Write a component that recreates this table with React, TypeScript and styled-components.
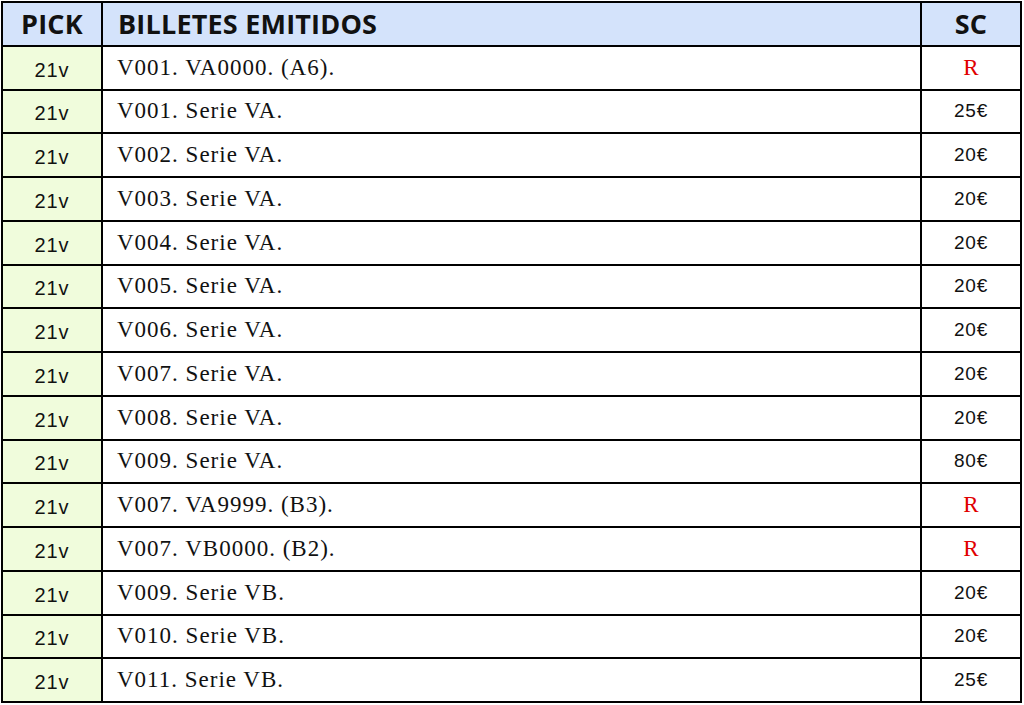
import styled, { createGlobalStyle } from 'styled-components';

const GlobalStyle = createGlobalStyle`
   html, body {
      margin: 0;
      padding: 0;
      background: #ffffff;
   }
`;

const Table = styled.div`
   margin: 1px;
   width: 1021px;
   height: 702px;
   box-sizing: border-box;
   padding: 2px;
   background-color: #000;
   display: grid;
   grid-template-columns: 98px 1fr 98px;
   grid-template-rows: repeat(16, 1fr);
   gap: 2px;
`;

const HeadCell = styled.div<{ align?: 'left' | 'center' }>`
   background-color: #d4e3fb;
   display: flex;
   align-items: center;
   justify-content: ${(props) => (props.align === 'left' ? 'flex-start' : 'center')};
   padding-left: ${(props) => (props.align === 'left' ? '15px' : '0')};
   font-family: 'Open Sans', 'Noto Sans', sans-serif;
   font-weight: 700;
   font-size: 27px;
   letter-spacing: 0.2px;
   color: #111;
`;

const PickCell = styled.div`
   background-color: #f0fcdc;
   display: flex;
   align-items: center;
   justify-content: center;
   font-family: 'Liberation Sans', Arial, sans-serif;
   font-size: 20px;
   letter-spacing: 1px;
   color: #111;
   padding-top: 5px;
`;

const NameCell = styled.div`
   background-color: #fff;
   display: flex;
   align-items: center;
   padding-left: 14px;
   font-family: 'Liberation Serif', 'Times New Roman', serif;
   font-size: 23px;
   letter-spacing: 1px;
   color: #111;
`;

const PriceCell = styled.div<{ rare: boolean }>`
   background-color: #fff;
   display: flex;
   align-items: center;
   justify-content: center;
   color: ${(props) => (props.rare ? '#e00000' : '#111')};
   font-family: ${(props) =>
      props.rare ? "'Liberation Serif', 'Times New Roman', serif" : "'Liberation Sans', Arial, sans-serif"};
   font-size: ${(props) => (props.rare ? '23px' : '19px')};
   letter-spacing: ${(props) => (props.rare ? '0' : '0.8px')};
`;

const rows: [string, string][] = [
   ['V001. VA0000. (A6).', 'R'],
   ['V001. Serie VA.', '25€'],
   ['V002. Serie VA.', '20€'],
   ['V003. Serie VA.', '20€'],
   ['V004. Serie VA.', '20€'],
   ['V005. Serie VA.', '20€'],
   ['V006. Serie VA.', '20€'],
   ['V007. Serie VA.', '20€'],
   ['V008. Serie VA.', '20€'],
   ['V009. Serie VA.', '80€'],
   ['V007. VA9999. (B3).', 'R'],
   ['V007. VB0000. (B2).', 'R'],
   ['V009. Serie VB.', '20€'],
   ['V010. Serie VB.', '20€'],
   ['V011. Serie VB.', '25€'],
];

export default function App() {
   return (
      <>
         <GlobalStyle />
         <Table>
            <HeadCell>PICK</HeadCell>
            <HeadCell align="left">BILLETES EMITIDOS</HeadCell>
            <HeadCell>SC</HeadCell>
            {rows.map(([name, price], i) => (
               <>
                  <PickCell key={`p${i}`}>21v</PickCell>
                  <NameCell key={`n${i}`}>{name}</NameCell>
                  <PriceCell key={`s${i}`} rare={price === 'R'}>
                     {price}
                  </PriceCell>
               </>
            ))}
         </Table>
      </>
   );
}
